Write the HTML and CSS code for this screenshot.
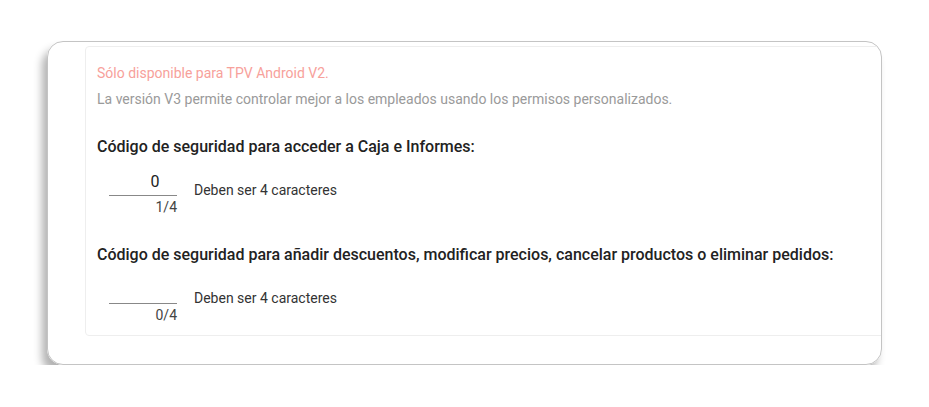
FILE: index.html
```html
<!DOCTYPE html>
<html lang="es">
<head>
    <meta charset="UTF-8">
    <meta name="viewport" content="width=device-width, initial-scale=1.0">
    <title>Código de seguridad</title>
    <link rel="stylesheet" href="styles.css">
</head>
<body>
    <div class="frame">
        <div class="card">
            <p class="aviso">Sólo disponible para TPV Android V2.</p>
            <p class="nota">La versión V3 permite controlar mejor a los empleados usando los permisos personalizados.</p>

            <!-- Código Caja e Informes -->
            <h3 class="titulo">Código de seguridad para acceder a Caja e Informes:</h3>
            <div class="campo">
                <div class="pin">
                    <div class="pin-valor">0</div>
                    <div class="pin-contador">1/4</div>
                </div>
                <span class="ayuda">Deben ser 4 caracteres</span>
            </div>

            <!-- Código descuentos -->
            <h3 class="titulo">Código de seguridad para añadir descuentos, modificar precios, cancelar productos o eliminar pedidos:</h3>
            <div class="campo">
                <div class="pin">
                    <div class="pin-valor"></div>
                    <div class="pin-contador">0/4</div>
                </div>
                <span class="ayuda">Deben ser 4 caracteres</span>
            </div>
        </div>
    </div>
</body>
</html>
```
FILE: styles.css
```css
body {
    font-family: Roboto, "Open Sans", sans-serif;
    margin: 0;
    padding: 0;
    background-color: #fff;
    color: #222;
}

/* Marco exterior */
.frame {
    margin: 41px 0 0 47px;
    width: 796px;
    height: 318px;
    border: 1px solid #c4c4c4;
    border-radius: 16px;
    box-shadow: -5px 8px 9px rgba(0, 0, 0, 0.3);
    overflow: hidden;
    padding: 4px 0 0 37px;
}

.card {
    width: 900px;
    height: 290px;
    border: 1px solid #eee;
    border-radius: 4px;
    padding: 16px 0 0 11px;
    box-sizing: border-box;
}

.aviso {
    margin: 0;
    font-size: 14px;
    line-height: 20px;
    color: #f7a19b;
}

.nota {
    margin: 6px 0 0;
    font-size: 14px;
    line-height: 20px;
    color: #9a9a9a;
}

.titulo {
    margin: 28px 0 0;
    font-size: 16px;
    font-weight: 500;
    line-height: 20px;
    color: #222;
}

.titulo + .campo {
    margin-top: 14px;
}

.campo + .titulo {
    margin-top: 27px;
}

.campo {
    display: flex;
    align-items: flex-start;
    gap: 17px;
    margin-left: 12px;
}

.pin {
    width: 68px;
}

.pin-valor {
    height: 25px;
    line-height: 22px;
    font-size: 16px;
    text-align: center;
    border-bottom: 1px solid #888;
    padding-left: 24px;
    box-sizing: border-box;
}

.pin-contador {
    text-align: right;
    font-size: 14px;
    line-height: 22px;
    color: #444;
}

.ayuda {
    font-size: 14px;
    line-height: 20px;
    color: #333;
    margin-top: 9px;
}
```
